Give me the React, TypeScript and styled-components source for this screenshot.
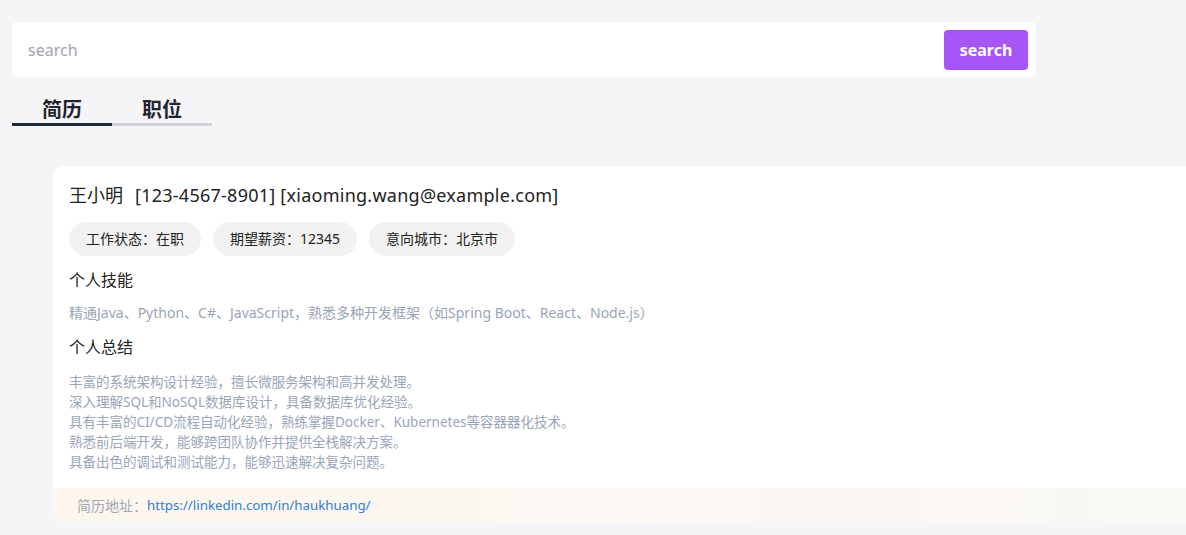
import React, { useState } from "react";
import styled, { createGlobalStyle } from "styled-components";

const Global = createGlobalStyle`
  html, body { margin: 0; padding: 0; background: #f5f5f7; overflow: hidden; }
  body { font-family: "Noto Sans", "Noto Sans CJK SC", sans-serif; }
  * { box-sizing: border-box; }
`;

const Page = styled.div`
  padding: 22px 0 0 12px;
  width: 1400px;
`;

const SearchBar = styled.div`
  width: 1024px;
  height: 55px;
  background: #fff;
  border-radius: 5px;
  display: flex;
  align-items: center;
  padding: 0 8px 0 14px;
`;

const SearchInput = styled.input`
  flex: 1;
  border: none;
  outline: none;
  font-family: "Noto Sans", "Noto Sans CJK SC", sans-serif;
  font-size: 16px;
  color: #333;
  background: transparent;
  &::placeholder { color: #a3a3ad; }
`;

const SearchButton = styled.button`
  width: 84px;
  height: 40px;
  border: none;
  border-radius: 4px;
  background: #a855f7;
  color: #fff;
  font-family: "Noto Sans", "Noto Sans CJK SC", sans-serif;
  font-weight: 700;
  font-size: 16px;
  cursor: pointer;
`;

const Tabs = styled.div`
  display: flex;
  margin-top: 18px;
`;

const Tab = styled.div<{ $active?: boolean }>`
  width: 100px;
  text-align: center;
  font-size: 20px;
  font-weight: 700;
  color: #1f2430;
  height: 31px;
  line-height: 30px;
  border-bottom: 3px solid ${(p) => (p.$active ? "#1f2937" : "#d4d4d8")};
  cursor: pointer;
`;

const Card = styled.div`
  margin: 40px 0 0 41px;
  width: 1220px;
  background: #fff;
  border-radius: 10px;
  overflow: hidden;
`;

const CardBody = styled.div`
  padding: 17px 16px 16px;
`;

const NameLine = styled.div`
  font-size: 18px;
  color: #222;
  line-height: 24px;
  letter-spacing: 0.25px;
`;

const Name = styled.span`
  margin-right: 12px;
  letter-spacing: 0;
`;

const TagRow = styled.div`
  display: flex;
  gap: 12px;
  margin-top: 15px;
`;

const Tag = styled.span`
  height: 34px;
  line-height: 34px;
  padding: 0 17px;
  border-radius: 17px;
  background: #f2f2f2;
  font-size: 14px;
  color: #222;
`;

const SectionTitle = styled.div<{ $mt: number }>`
  margin-top: ${(p) => p.$mt}px;
  font-size: 16px;
  color: #222;
  line-height: 20px;
`;

const SkillText = styled.div`
  margin-top: 13px;
  font-size: 14px;
  color: #9aa5b8;
  line-height: 20px;
`;

const Summary = styled.div`
  margin-top: 15px;
  font-size: 13.5px;
  color: #9aa5b8;
  line-height: 20px;
`;

const Footer = styled.div`
  height: 34px;
  display: flex;
  align-items: center;
  padding-left: 24px;
  font-size: 14px;
  background: linear-gradient(90deg, #fdf6ee 0%, #f9f8f6 100%);
`;

const FooterLabel = styled.span`
  color: #a0a6b4;
`;

const Link = styled.a`
  color: #2f7fd3;
  font-size: 13.3px;
  text-decoration: none;
`;

export default function App() {
  const [tab, setTab] = useState(0);
  return (
    <>
      <Global />
      <Page>
        <SearchBar>
          <SearchInput placeholder="search" />
          <SearchButton>search</SearchButton>
        </SearchBar>
        <Tabs>
          <Tab $active={tab === 0} onClick={() => setTab(0)}>简历</Tab>
          <Tab $active={tab === 1} onClick={() => setTab(1)}>职位</Tab>
        </Tabs>
        <Card>
          <CardBody>
            <NameLine>
              <Name>王小明</Name>[123-4567-8901] [xiaoming.wang@example.com]
            </NameLine>
            <TagRow>
              <Tag>工作状态：在职</Tag>
              <Tag>期望薪资：12345</Tag>
              <Tag>意向城市：北京市</Tag>
            </TagRow>
            <SectionTitle $mt={14}>个人技能</SectionTitle>
            <SkillText>精通Java、Python、C#、JavaScript，熟悉多种开发框架（如Spring Boot、React、Node.js）</SkillText>
            <SectionTitle $mt={14}>个人总结</SectionTitle>
            <Summary>
              丰富的系统架构设计经验，擅长微服务架构和高并发处理。<br />
              深入理解SQL和NoSQL数据库设计，具备数据库优化经验。<br />
              具有丰富的CI/CD流程自动化经验，熟练掌握Docker、Kubernetes等容器器化技术。<br />
              熟悉前后端开发，能够跨团队协作并提供全栈解决方案。<br />
              具备出色的调试和测试能力，能够迅速解决复杂问题。
            </Summary>
          </CardBody>
          <Footer>
            <FooterLabel>简历地址：</FooterLabel>
            <Link href="#">https://linkedin.com/in/haukhuang/</Link>
          </Footer>
        </Card>
      </Page>
    </>
  );
}
